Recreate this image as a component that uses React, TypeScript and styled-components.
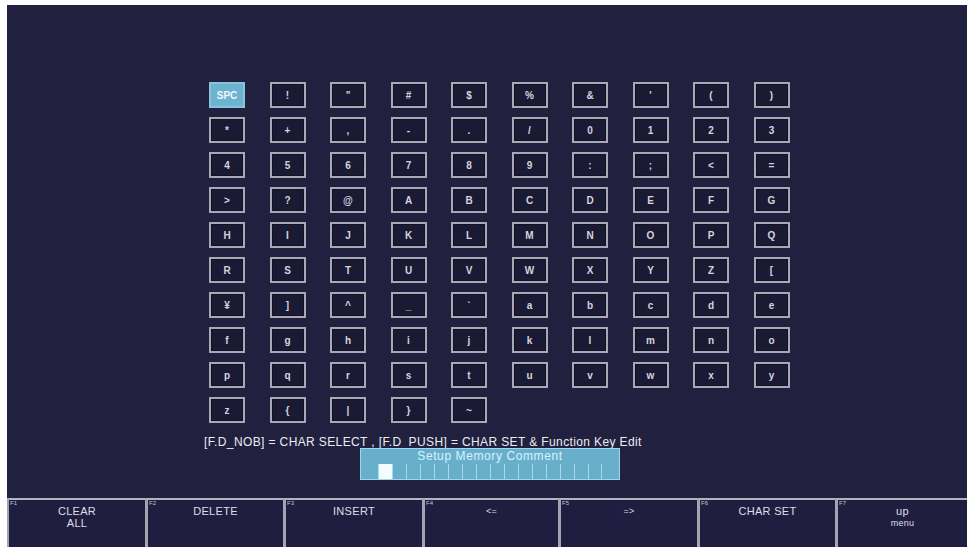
import styled, { createGlobalStyle } from "styled-components";

const GlobalStyle = createGlobalStyle`
	html, body {
		margin: 0;
		padding: 0;
		background: #ffffff;
	}
	body {
		font-family: "Liberation Sans", Arial, sans-serif;
	}
`;

const ROWS: string[][] = [
	["SPC", "!", '"', "#", "$", "%", "&", "'", "(", ")"],
	["*", "+", ",", "-", ".", "/", "0", "1", "2", "3"],
	["4", "5", "6", "7", "8", "9", ":", ";", "<", "="],
	[">", "?", "@", "A", "B", "C", "D", "E", "F", "G"],
	["H", "I", "J", "K", "L", "M", "N", "O", "P", "Q"],
	["R", "S", "T", "U", "V", "W", "X", "Y", "Z", "["],
	["¥", "]", "^", "_", "`", "a", "b", "c", "d", "e"],
	["f", "g", "h", "i", "j", "k", "l", "m", "n", "o"],
	["p", "q", "r", "s", "t", "u", "v", "w", "x", "y"],
	["z", "{", "|", "}", "~"],
];

const KEYS = [
	{ f: "F1", label: ["CLEAR", "ALL"] },
	{ f: "F2", label: ["DELETE"] },
	{ f: "F3", label: ["INSERT"] },
	{ f: "F4", label: ["<="], small: true },
	{ f: "F5", label: ["=>"], small: true },
	{ f: "F6", label: ["CHAR SET"] },
	{ f: "F7", label: ["up", "menu"], small: true },
];

const Screen = styled.div`
	position: relative;
	margin: 5px 0 0 7px;
	width: 960px;
	height: 542px;
	background: #22203f;
	display: flex;
	flex-direction: column;
	overflow: hidden;
`;

const Main = styled.div`
	flex: 1;
	padding: 77px 0 0 202px;
	display: flex;
	flex-direction: column;
`;

const CharGrid = styled.div`
	display: grid;
	grid-template-columns: repeat(10, 36px);
	grid-auto-rows: 26px;
	column-gap: 24.5px;
	row-gap: 9px;
`;

const Cell = styled.div<{ $selected?: boolean }>`
	box-sizing: border-box;
	display: flex;
	align-items: center;
	justify-content: center;
	border: 2px solid ${(p) => (p.$selected ? "#86c4da" : "#a9a9b6")};
	background: ${(p) => (p.$selected ? "#6cb3cf" : "#1b1a35")};
	box-shadow: ${(p) => (p.$selected ? "none" : "inset 0 0 0 1px #121126")};
	color: ${(p) => (p.$selected ? "#eef8ff" : "#d4d4de")};
	font-size: 10px;
	font-weight: bold;
`;

const Help = styled.div`
	margin: 12px 0 0 -5px;
	color: #ececf2;
	font-size: 12px;
	letter-spacing: 0.38px;
	white-space: nowrap;
`;

const Dialog = styled.div`
	position: absolute;
	left: 353px;
	top: 443px;
	width: 260px;
	height: 32px;
	box-sizing: border-box;
	background: #68afcc;
	border: 1px solid #a0d6e8;
	display: flex;
	flex-direction: column;
`;

const DialogTitle = styled.div`
	text-align: center;
	color: #d9f3ff;
	font-size: 12px;
	letter-spacing: 0.6px;
	line-height: 12px;
	margin-top: 1px;
`;

const Slots = styled.div`
	display: flex;
	margin: 2px 0 0 17px;
	height: 15px;
`;

const Slot = styled.div<{ $active?: boolean }>`
	width: 14px;
	box-sizing: border-box;
	border-left: 1px solid #a6dcef;
	background: ${(p) => (p.$active ? "#f4fbff" : "transparent")};
	&:last-child {
		border-right: 1px solid #a6dcef;
	}
`;

const FuncBar = styled.div`
	display: grid;
	grid-template-columns: 138px 138px 139px 136px 139px 138px 132px;
	height: 49px;
`;

const FuncKey = styled.div`
	position: relative;
	box-sizing: border-box;
	border-top: 2px solid #b4b4c0;
	border-left: 3px solid #a4a4b0;
	background: #201e40;
	display: flex;
	flex-direction: column;
	align-items: center;
	padding-top: 5px;
	color: #dedee8;
	&:first-child {
		border-left-width: 2px;
	}
`;

const KeyNo = styled.span`
	position: absolute;
	left: 1px;
	top: 0;
	font-size: 6px;
	color: #c4c4d0;
`;

const KeyLine = styled.span<{ $small?: boolean }>`
	font-size: ${(p) => (p.$small ? "9px" : "11px")};
	letter-spacing: 0.3px;
	line-height: 12px;
`;

export default function App() {
	return (
		<>
			<GlobalStyle />
			<Screen>
				<Main>
					<CharGrid>
						{ROWS.flat().map((ch, i) => (
							<Cell key={i} $selected={i === 0}>
								{ch}
							</Cell>
						))}
					</CharGrid>
					<Help>
						[F.D_NOB] = CHAR SELECT , [F.D_PUSH] = CHAR SET &amp; Function Key Edit
					</Help>
				</Main>
				<Dialog>
					<DialogTitle>Setup Memory Comment</DialogTitle>
					<Slots>
						{Array.from({ length: 16 }).map((_, i) => (
							<Slot key={i} $active={i === 0} />
						))}
					</Slots>
				</Dialog>
				<FuncBar>
					{KEYS.map((k) => (
						<FuncKey key={k.f}>
							<KeyNo>{k.f}</KeyNo>
							{k.label.map((l, j) => (
								<KeyLine key={l} $small={k.small && (j > 0 || k.label.length === 1)}>
									{l}
								</KeyLine>
							))}
						</FuncKey>
					))}
				</FuncBar>
			</Screen>
		</>
	);
}
